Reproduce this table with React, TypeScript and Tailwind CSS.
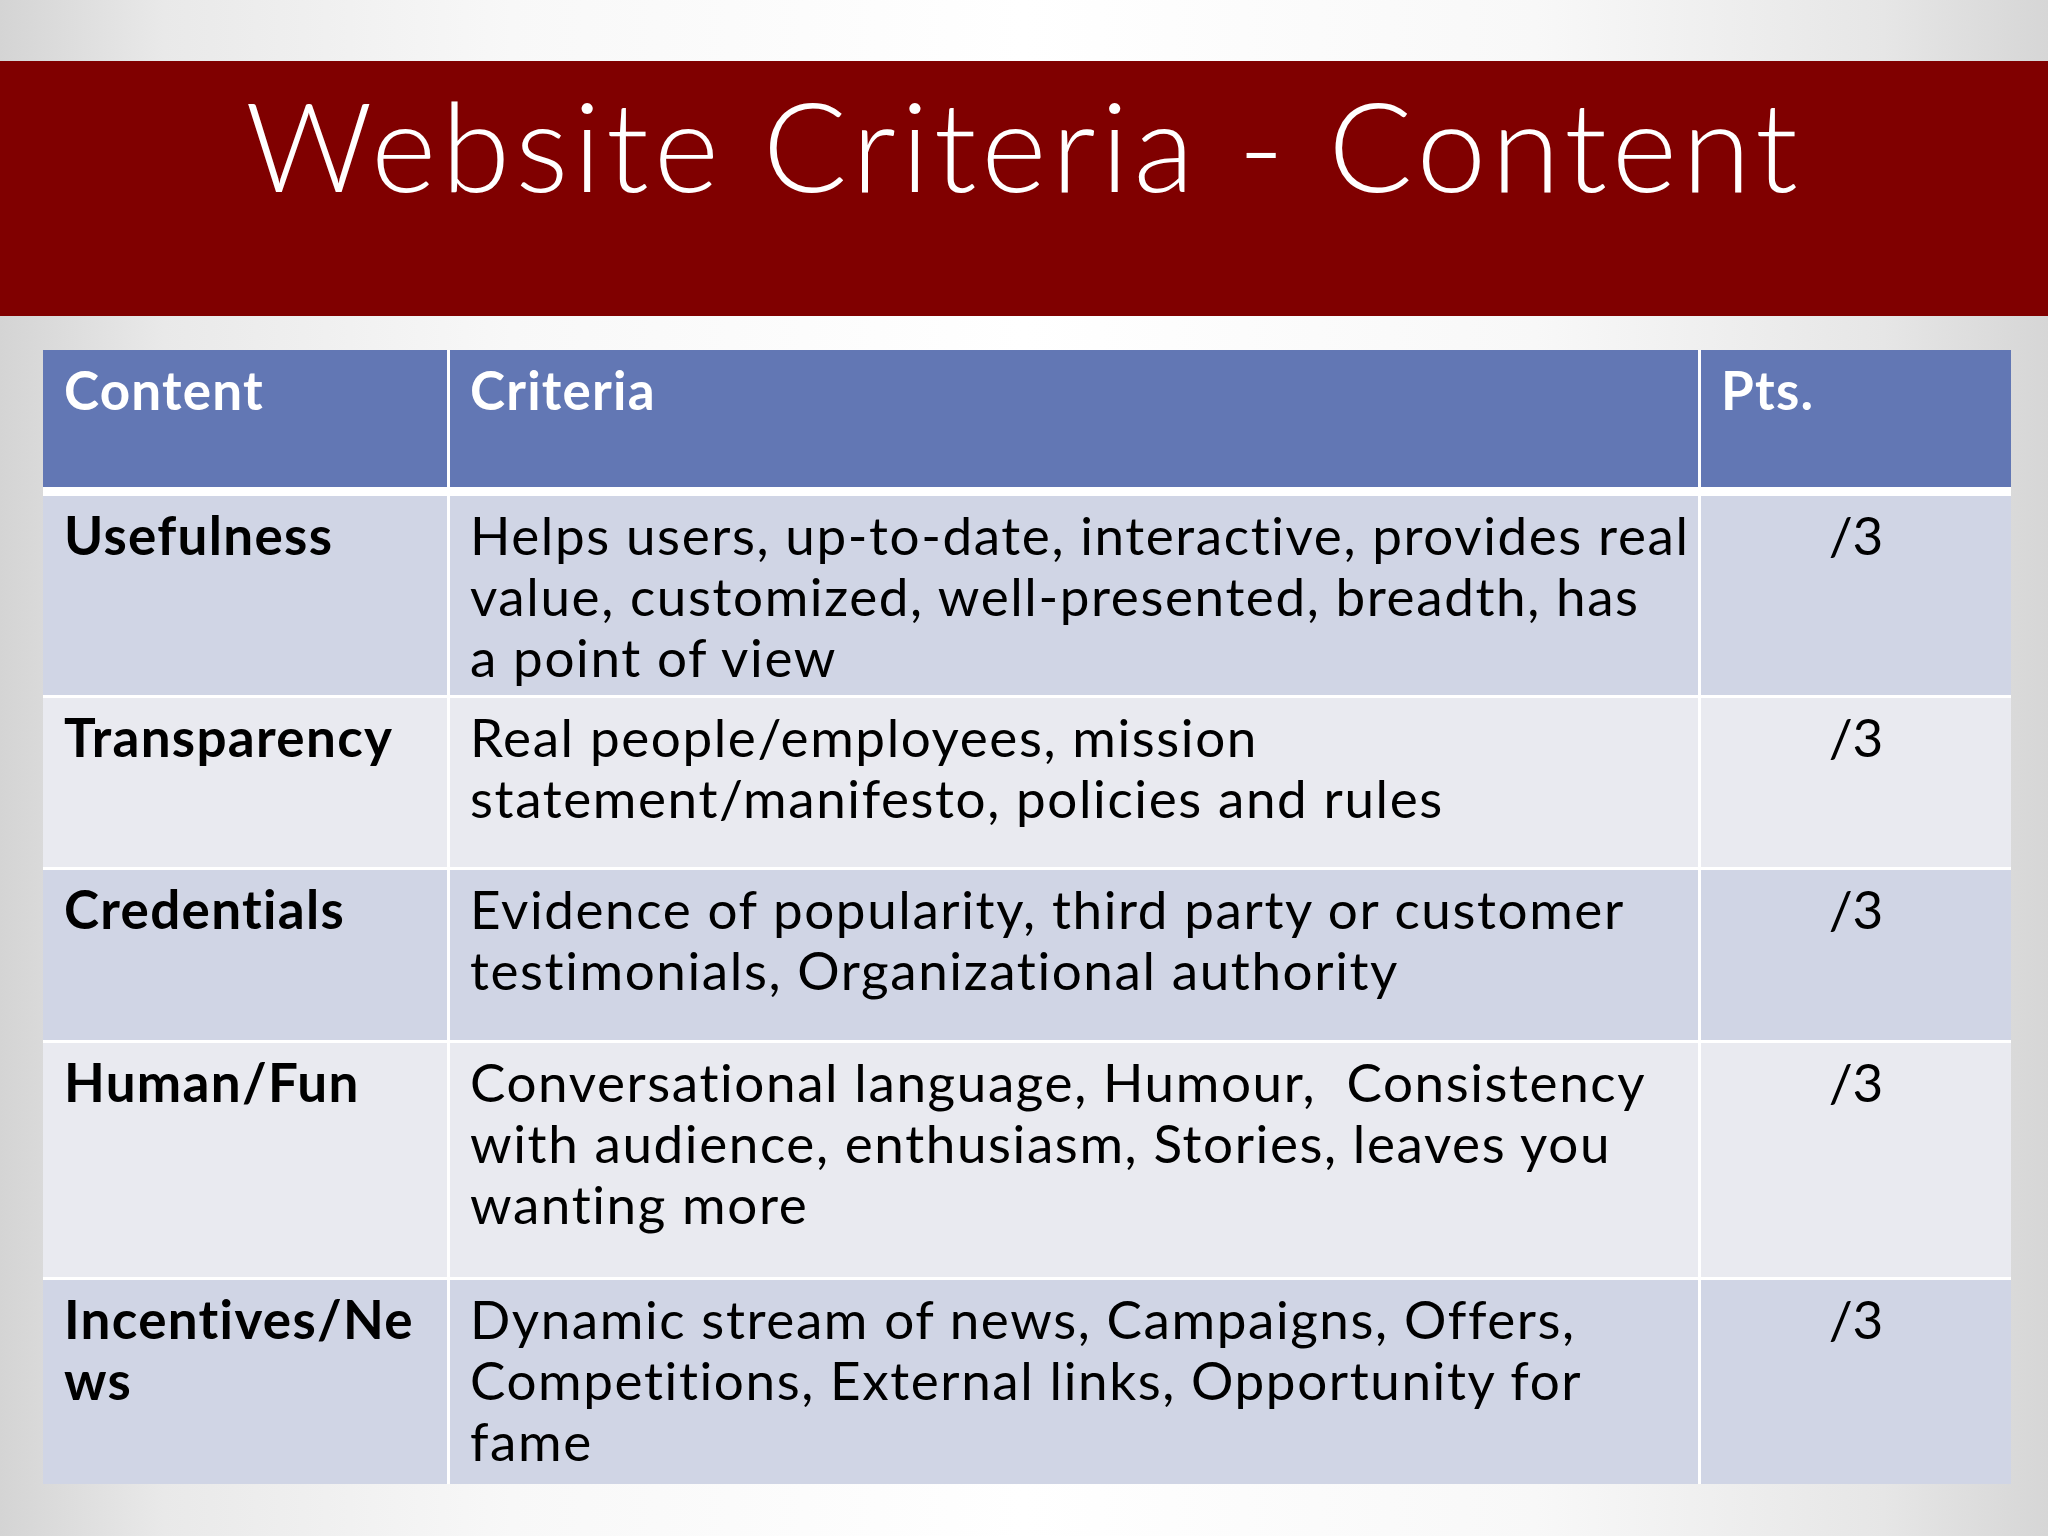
const rows = [
  {
    name: ["Usefulness"],
    lines: [
      "Helps users, up-to-date, interactive, provides real",
      "value, customized, well-presented, breadth, has",
      "a point of view",
    ],
    h: "h-[199px]",
    bg: "bg-[#d0d5e5]",
  },
  {
    name: ["Transparency"],
    lines: ["Real people/employees, mission", "statement/manifesto, policies and rules"],
    h: "h-[169px]",
    bg: "bg-[#e9eaf0]",
  },
  {
    name: ["Credentials"],
    lines: [
      "Evidence of popularity, third party or customer",
      "testimonials, Organizational authority",
    ],
    h: "h-[170px]",
    bg: "bg-[#d0d5e5]",
  },
  {
    name: ["Human/Fun"],
    lines: [
      "Conversational language, Humour,\u00a0 Consistency",
      "with audience, enthusiasm, Stories, leaves you",
      "wanting more",
    ],
    h: "h-[234px]",
    bg: "bg-[#e9eaf0]",
  },
  {
    name: ["Incentives/Ne", "ws"],
    lines: [
      "Dynamic stream of news, Campaigns, Offers,",
      "Competitions, External links, Opportunity for",
      "fame",
    ],
    h: "h-[204px]",
    bg: "bg-[#d0d5e5]",
  },
];

function Lines({ items }: { items: string[] }) {
  return (
    <>
      {items.map((l, i) => (
        <div key={i} className="whitespace-pre">
          {l}
        </div>
      ))}
    </>
  );
}

export default function App() {
  return (
    <div className="w-[2048px] h-[1536px] overflow-hidden flex flex-col font-['Lato','Noto_Sans',sans-serif] bg-[linear-gradient(90deg,#d4d4d4_0%,#e9e9e9_8%,#f8f8f8_25%,#ffffff_50%,#f8f8f8_75%,#e6e6e6_92%,#d6d6d6_100%)]">
      <div className="h-[61px]" />
      <div className="h-[255px] bg-[#800000] flex justify-center pt-[21px]">
        <h1 className="text-[125px] leading-none font-light text-white tracking-[5px]">
          Website Criteria - Content
        </h1>
      </div>

      <div className="ml-[43px] mt-[34px] w-[1968px] bg-white flex flex-col gap-y-[3px] text-[53px] leading-[61px]">
        <div className="grid grid-cols-[404px_1248px_310px] gap-x-[3px] h-[137px] mb-[6px] text-white font-bold tracking-[1.2px]">
          <div className="bg-[#6277b4] pl-[21px] pt-[9px]">Content</div>
          <div className="bg-[#6277b4] pl-[20px] pt-[9px]">Criteria</div>
          <div className="bg-[#6277b4] pl-[20px] pt-[9px]">Pts.</div>
        </div>
        {rows.map((r, i) => (
          <div key={i} className={`grid grid-cols-[404px_1248px_310px] gap-x-[3px] text-black ${r.h}`}>
            <div className={`${r.bg} pl-[21px] pt-[8px] font-bold tracking-[1.3px]`}>
              <Lines items={r.name} />
            </div>
            <div className={`${r.bg} pl-[20px] pt-[8px] tracking-[1.6px]`}>
              <Lines items={r.lines} />
            </div>
            <div className={`${r.bg} pt-[8px] text-center`}>/3</div>
          </div>
        ))}
      </div>
    </div>
  );
}
